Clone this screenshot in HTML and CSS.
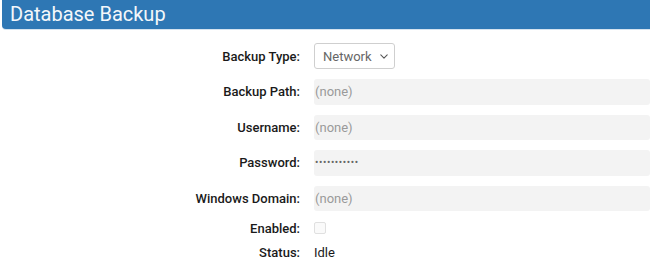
FILE: index.html
```html
<!DOCTYPE html>
<html>
<head>
  <title>Database Backup</title>
  <meta charset="utf-8">
  <link rel="stylesheet" href="styles.css">
</head>
<body>
  <div class="header">
    <h1>Database Backup</h1>
  </div>

  <div class="form">
    <label class="label" for="backup-type">Backup Type:</label>
    <div class="field">
      <span class="select-wrap">
        <select id="backup-type" class="select">
          <option>Network</option>
          <option>Local</option>
        </select>
        <svg class="chevron" viewBox="0 0 10 6" fill="none" stroke="currentColor">
          <path stroke-width="1.3" stroke-linecap="round" stroke-linejoin="round" d="M1 1l4 4 4-4" />
        </svg>
      </span>
    </div>

    <label class="label" for="backup-path">Backup Path:</label>
    <div class="field">
      <input id="backup-path" class="input" type="text" placeholder="(none)" disabled>
    </div>

    <label class="label" for="username">Username:</label>
    <div class="field">
      <input id="username" class="input" type="text" placeholder="(none)" disabled>
    </div>

    <label class="label" for="password">Password:</label>
    <div class="field">
      <input id="password" class="input" type="password" value="secretpass1" disabled>
    </div>

    <label class="label" for="domain">Windows Domain:</label>
    <div class="field">
      <input id="domain" class="input" type="text" placeholder="(none)" disabled>
    </div>

    <label class="label row-small" for="enabled">Enabled:</label>
    <div class="field row-small">
      <input id="enabled" class="checkbox" type="checkbox" disabled>
    </div>

    <span class="label row-small">Status:</span>
    <div class="field row-small">
      <span class="value">Idle</span>
    </div>
  </div>
</body>
</html>
```

FILE: styles.css
```css
body {
  font-family: Roboto, "Liberation Sans", sans-serif;
  margin: 0;
  width: 650px;
  overflow: hidden;
  color: #222;
}

.header {
  margin-left: 2px;
  height: 29px;
  background-color: #2e77b4;
  border-bottom-left-radius: 4px;
  box-shadow: 0 1px 0 #d5e3ef;
  display: flex;
  align-items: center;
}

h1 {
  font-size: 20px;
  font-weight: 400;
  color: #f4f7fa;
  margin: 0 0 0 8px;
  line-height: 29px;
}

.form {
  display: grid;
  grid-template-columns: 300px 1fr;
  column-gap: 14px;
  row-gap: 10px;
  padding-top: 14px;
}

.label {
  font-size: 13px;
  font-weight: 500;
  color: #1a1a1a;
  text-align: right;
  display: flex;
  align-items: center;
  justify-content: flex-end;
}

.field {
  display: flex;
  align-items: center;
}

.row-small {
  height: 14px;
}

.select-wrap {
  position: relative;
  display: inline-flex;
}

.select {
  appearance: none;
  -webkit-appearance: none;
  font-family: inherit;
  font-size: 13px;
  color: #666;
  width: 81px;
  height: 26px;
  padding: 0 0 0 8px;
  border: 1px solid #cfcfcf;
  border-radius: 3px;
  background-color: #fff;
  margin: 0;
}

.chevron {
  position: absolute;
  right: 7px;
  top: 11px;
  width: 8px;
  height: 5px;
  color: #555;
  pointer-events: none;
}

.input {
  width: 100%;
  height: 25.5px;
  box-sizing: border-box;
  border: none;
  border-radius: 3px;
  background-color: #f3f3f3;
  font-family: inherit;
  font-size: 13px;
  color: #888;
  padding: 0 0 0 1px;
  margin: 0;
}

.input::placeholder {
  color: #9a9a9a;
}

.input[type="password"] {
  font-size: 10px;
  letter-spacing: 0.6px;
  color: #666;
}

.checkbox {
  appearance: none;
  -webkit-appearance: none;
  width: 12px;
  height: 12px;
  margin: 0;
  border: 1px solid #e0e0e0;
  border-radius: 2px;
  background-color: #fafafa;
}

.value {
  font-size: 13px;
  color: #1a1a1a;
}
```
